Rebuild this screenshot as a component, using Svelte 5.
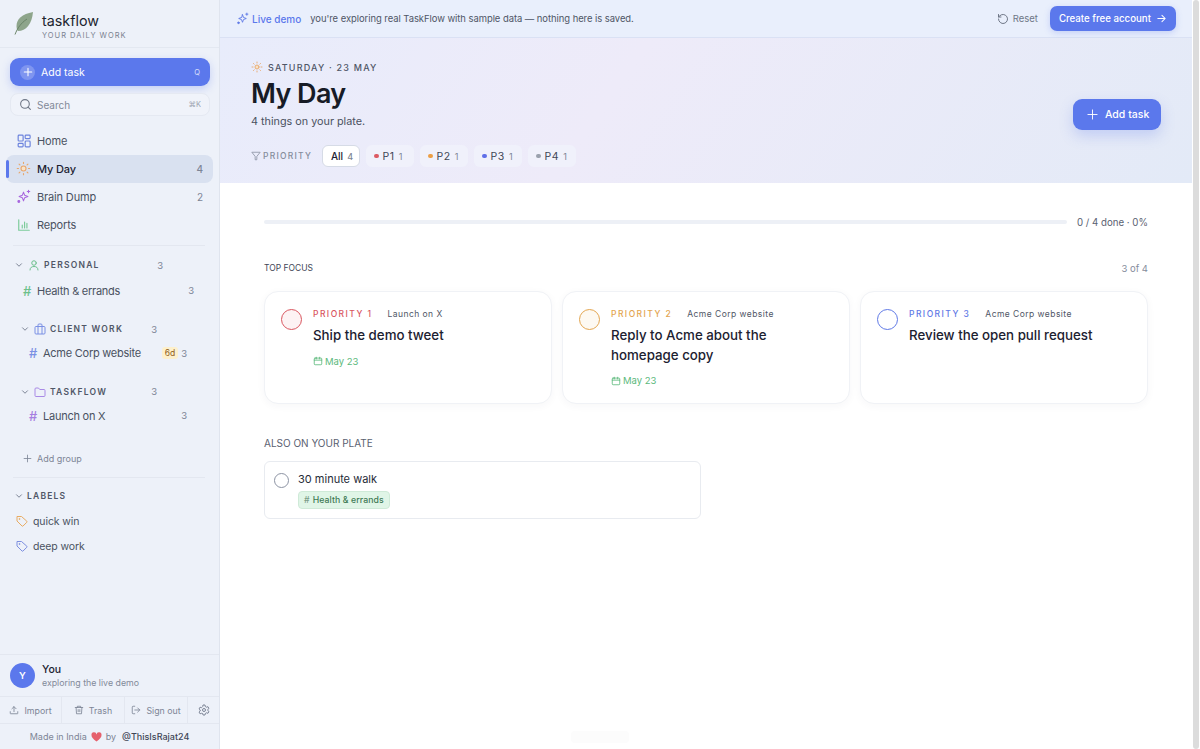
<script>
  const nav = [
    { name: 'Home', icon: 'home', count: '' },
    { name: 'My Day', icon: 'sun', count: 4, active: true },
    { name: 'Brain Dump', icon: 'spark', count: 2 },
    { name: 'Reports', icon: 'chart', count: '' }
  ];
  const filters = [
    { name: 'P1', color: '#dc5a63' },
    { name: 'P2', color: '#ec9f45' },
    { name: 'P3', color: '#5f6fe8' },
    { name: 'P4', color: '#9aa1ad' }
  ];
  const focus = [
    { level: 'PRIORITY 1', project: 'Launch on X', title: 'Ship the demo tweet', color: '#d9565f', fill: '#fdf3f4' },
    { level: 'PRIORITY 2', project: 'Acme Corp website', title: 'Reply to Acme about the homepage copy', color: '#e3a54f', fill: '#fdf9f2' },
    { level: 'PRIORITY 3', project: 'Acme Corp website', title: 'Review the open pull request', color: '#5f79e6', fill: '#ffffff', noDate: true }
  ];
</script>

{#snippet sun(size)}
  <svg width={size} height={size} viewBox="0 0 24 24" fill="none" stroke="#e8a76c" stroke-width="1.8" stroke-linecap="round">
    <circle cx="12" cy="12" r="4" fill="#f8e3c8" />
    <path d="M12 2v2M12 20v2M4.9 4.9l1.4 1.4M17.7 17.7l1.4 1.4M2 12h2M20 12h2M4.9 19.1l1.4-1.4M17.7 6.3l1.4-1.4" />
  </svg>
{/snippet}

{#snippet spark(size, color)}
  <svg width={size} height={size} viewBox="0 0 24 24" fill="none" stroke={color} stroke-width="1.7" stroke-linecap="round" stroke-linejoin="round">
    <path d="M12 5l1.900 5.100L19 12l-5.100 1.900L12 19l-1.900-5.100L5 12l5.100-1.900z" />
    <path d="M20 2v4M18 4h4" />
    <circle cx="4.500" cy="20" r="1.500" fill={color} />
  </svg>
{/snippet}

{#snippet tag(color)}
  <svg width="12" height="12" viewBox="0 0 24 24" fill="none" stroke={color} stroke-width="2" stroke-linejoin="round">
    <path d="M2 3v9l10 10a1.500 1.500 0 0 0 2.100 0l7.500-7.500a1.500 1.500 0 0 0 0-2.100L11 3z" />
    <circle cx="7" cy="8" r="1" />
  </svg>
{/snippet}

{#snippet chevron()}
  <svg class="chev" width="10" height="10" viewBox="0 0 24 24" fill="none" stroke="#7d8596" stroke-width="2.400" stroke-linecap="round" stroke-linejoin="round">
    <path d="M6 9l6 6 6-6" />
  </svg>
{/snippet}

{#snippet calendar()}
  <svg width="10" height="10" viewBox="0 0 24 24" fill="none" stroke="#5cb97c" stroke-width="2" stroke-linecap="round">
    <rect x="3" y="5" width="18" height="16" rx="2" />
    <path d="M3 10h18M8 3v4M16 3v4" />
  </svg>
{/snippet}

<div class="shell">
  <aside class="sidebar">
    <div class="brand">
      <svg width="20" height="23" viewBox="0 0 20 23">
        <path d="M19 0C8 2 2.500 7 2.500 14c0 2 .500 4 1.500 5C12 19 18 12 19 0z" fill="#8ea58b" />
        <path d="M1 22.500C3.500 16 7 11 13 7" fill="none" stroke="#6a8468" stroke-width="1" />
      </svg>
      <div class="brand-text">
        <div class="brand-name">taskflow</div>
        <div class="brand-sub">YOUR DAILY WORK</div>
      </div>
    </div>

    <div class="quick">
      <button class="add-task">
        <span class="plus-round">
          <svg width="10" height="10" viewBox="0 0 24 24" stroke="#fff" stroke-width="2.500" stroke-linecap="round"><path d="M12 3v18M3 12h18" /></svg>
        </span>
        <span>Add task</span>
        <span class="key">Q</span>
      </button>
      <div class="search">
        <svg width="13" height="13" viewBox="0 0 24 24" fill="none" stroke="#6f7787" stroke-width="2" stroke-linecap="round"><circle cx="11" cy="11" r="8" /><path d="M21 21l-4.300-4.300" /></svg>
        <span>Search</span>
        <span class="key">⌘K</span>
      </div>
    </div>

    <nav class="nav">
      {#each nav as item}
        <div class="nav-item" class:active={item.active}>
          <span class="nav-icon">
            {#if item.icon === 'home'}
              <svg width="14" height="14" viewBox="0 0 24 24" fill="none" stroke="#6c83dd" stroke-width="2"><rect x="2" y="2" width="8.500" height="10" rx="1.500" /><rect x="14" y="2" width="8.500" height="6" rx="1.500" /><rect x="14" y="12" width="8.500" height="10" rx="1.500" /><rect x="2" y="16" width="8.500" height="6" rx="1.500" /></svg>
            {:else if item.icon === 'sun'}
              {@render sun(15)}
            {:else if item.icon === 'spark'}
              {@render spark(15, '#a867de')}
            {:else}
              <svg width="14" height="14" viewBox="0 0 24 24" fill="none" stroke="#7ccb9a" stroke-width="2" stroke-linecap="round"><path d="M3 3v18h18M9 17v-5M13 17V7M17 17v-8" /></svg>
            {/if}
          </span>
          <span class="nav-name">{item.name}</span>
          <span class="nav-count">{item.count}</span>
        </div>
      {/each}
    </nav>

    <div class="rule first-rule"></div>

    <div class="group">
      <div class="group-head">
        {@render chevron()}
        <svg width="12" height="12" viewBox="0 0 24 24" fill="none" stroke="#6cc08c" stroke-width="2" stroke-linecap="round"><circle cx="12" cy="8" r="4.500" /><path d="M4 22c0-5 3.500-7 8-7s8 2 8 7" /></svg>
        <span class="group-name">PERSONAL</span>
        <span class="group-count">3</span>
      </div>
      <div class="project">
        <span class="hash green">#</span>
        <span class="project-name">Health &amp; errands</span>
        <span class="project-count">3</span>
      </div>
    </div>

    <div class="group nested">
      <div class="group-head">
        {@render chevron()}
        <svg width="12" height="12" viewBox="0 0 24 24" fill="none" stroke="#7b90e4" stroke-width="2"><rect x="2" y="7" width="20" height="15" rx="2" /><path d="M8 22V4a2 2 0 0 1 2-2h4a2 2 0 0 1 2 2v18" /></svg>
        <span class="group-name">CLIENT WORK</span>
        <span class="group-count">3</span>
      </div>
      <div class="project">
        <span class="hash blue">#</span>
        <span class="project-name">Acme Corp website</span>
        <span class="due">6d</span>
        <span class="project-count">3</span>
      </div>
    </div>

    <div class="group nested">
      <div class="group-head">
        {@render chevron()}
        <svg width="12" height="12" viewBox="0 0 24 24" fill="none" stroke="#a98ae6" stroke-width="2" stroke-linejoin="round"><path d="M2 6a2 2 0 0 1 2-2h5l2.500 3H20a2 2 0 0 1 2 2v10a2 2 0 0 1-2 2H4a2 2 0 0 1-2-2z" /></svg>
        <span class="group-name">TASKFLOW</span>
        <span class="group-count">3</span>
      </div>
      <div class="project">
        <span class="hash purple">#</span>
        <span class="project-name">Launch on X</span>
        <span class="project-count">3</span>
      </div>
    </div>

    <div class="add-group">
      <svg width="9" height="9" viewBox="0 0 24 24" stroke="#7d8596" stroke-width="2.200" stroke-linecap="round"><path d="M12 3v18M3 12h18" /></svg>
      <span>Add group</span>
    </div>

    <div class="rule"></div>

    <div class="labels">
      <div class="labels-head">
        {@render chevron()}
        <span class="group-name">LABELS</span>
      </div>
      <div class="label">{@render tag('#e8ab62')}<span>quick win</span></div>
      <div class="label">{@render tag('#7d8fe0')}<span>deep work</span></div>
    </div>

    <div class="side-foot">
      <div class="user">
        <span class="avatar">Y</span>
        <div>
          <div class="user-name">You</div>
          <div class="user-sub">exploring the live demo</div>
        </div>
      </div>
      <div class="actions">
        <div class="action">
          <svg width="10" height="10" viewBox="0 0 24 24" fill="none" stroke="#7d8596" stroke-width="2" stroke-linecap="round" stroke-linejoin="round"><path d="M12 16V4M7 9l5-5 5 5M3 16v4a1 1 0 0 0 1 1h16a1 1 0 0 0 1-1v-4" /></svg>
          Import
        </div>
        <div class="action">
          <svg width="10" height="10" viewBox="0 0 24 24" fill="none" stroke="#7d8596" stroke-width="2" stroke-linecap="round" stroke-linejoin="round"><path d="M3 6h18M8 6V3h8v3M5 6l1 15h12l1-15M10 11v5M14 11v5" /></svg>
          Trash
        </div>
        <div class="action">
          <svg width="10" height="10" viewBox="0 0 24 24" fill="none" stroke="#7d8596" stroke-width="2" stroke-linecap="round" stroke-linejoin="round"><path d="M9 3H5a2 2 0 0 0-2 2v14a2 2 0 0 0 2 2h4M16 17l5-5-5-5M21 12H9" /></svg>
          Sign out
        </div>
        <div class="action last">
          <svg width="12" height="12" viewBox="0 0 24 24" fill="none" stroke="#7d8596" stroke-width="2" stroke-linejoin="round"><circle cx="12" cy="12" r="3" /><path d="M10 2h4l.6 3 2.400 1.400 2.900-1 2 3.500-2.300 2v2.200l2.300 2-2 3.500-2.900-1-2.400 1.400-.6 3h-4l-.6-3L7 18.600l-2.900 1-2-3.500 2.300-2v-2.200l-2.300-2 2-3.500 2.900 1L9.400 5z" /></svg>
        </div>
      </div>
      <div class="made">
        Made in India
        <svg width="11" height="10" viewBox="0 0 24 22"><path d="M12 21C4 15 1 11 1 7a5.500 5.500 0 0 1 11-1.500A5.500 5.500 0 0 1 23 7c0 4-3 8-11 14z" fill="#e5616d" /></svg>
        by <b>@ThisIsRajat24</b>
      </div>
    </div>
  </aside>

  <main class="main">
    <div class="banner">
      <span class="live">{@render spark(13, '#5f79e6')}<span>Live demo</span></span>
      <span class="banner-text">you're exploring real TaskFlow with sample data — nothing here is saved.</span>
      <span class="reset">
        <svg width="12" height="12" viewBox="0 0 24 24" fill="none" stroke="#6f7787" stroke-width="2" stroke-linecap="round" stroke-linejoin="round"><path d="M3 12a9 9 0 1 0 3-6.700L3 8M3 3v5h5" /></svg>
        Reset
      </span>
      <button class="create">
        Create free account
        <svg width="11" height="11" viewBox="0 0 24 24" fill="none" stroke="#fff" stroke-width="2.200" stroke-linecap="round" stroke-linejoin="round"><path d="M4 12h16M13 5l7 7-7 7" /></svg>
      </button>
    </div>

    <header class="hero">
      <div>
        <div class="date">{@render sun(12)}<span>SATURDAY · 23 MAY</span></div>
        <h1>My Day</h1>
        <p class="plate">4 things on your plate.</p>
        <div class="filters">
          <span class="filter-label">
            <svg width="10" height="10" viewBox="0 0 24 24" fill="none" stroke="#8c93a3" stroke-width="2" stroke-linejoin="round"><path d="M2 3h20l-8 10v8h-4v-8z" /></svg>
            PRIORITY
          </span>
          <span class="chip all">All <i>4</i></span>
          {#each filters as f}
            <span class="chip"><em style="background: {f.color}"></em>{f.name} <i>1</i></span>
          {/each}
        </div>
      </div>
      <button class="hero-add">
        <svg width="11" height="11" viewBox="0 0 24 24" stroke="#fff" stroke-width="2" stroke-linecap="round"><path d="M12 2v20M2 12h20" /></svg>
        Add task
      </button>
    </header>

    <section class="content">
      <div class="progress">
        <div class="track"></div>
        <span>0 / 4 done · 0%</span>
      </div>

      <div class="focus-head">
        <span>TOP FOCUS</span>
        <span class="of">3 of 4</span>
      </div>

      <div class="cards">
        {#each focus as t}
          <article class="card">
            <span class="ring" style="border-color: {t.color}; background: {t.fill}"></span>
            <div>
              <div class="meta">
                <span class="level" style="color: {t.color}">{t.level}</span>
                <span class="project-tag">{t.project}</span>
              </div>
              <h3>{t.title}</h3>
              {#if !t.noDate}
                <div class="when">{@render calendar()}<span>May 23</span></div>
              {/if}
            </div>
          </article>
        {/each}
      </div>

      <h2 class="also">ALSO ON YOUR PLATE</h2>
      <article class="row">
        <span class="row-ring"></span>
        <div>
          <div class="row-title">30 minute walk</div>
          <span class="pill"><i>#</i> Health &amp; errands</span>
        </div>
      </article>
    </section>
  </main>

  <div class="scroll"><div class="thumb"></div></div>
  <div class="ghost"></div>
</div>

<style>
  :global(body) {
    margin: 0;
    background: #fff;
    font-family: Inter, "Noto Sans", sans-serif;
    color: #1c2130;
    overflow: hidden;
  }

  .shell {
    display: flex;
    height: 749px;
    overflow: hidden;
    position: relative;
  }

  button {
    font: inherit;
    border: 0;
    color: #fff;
  }

  svg {
    flex: none;
    display: block;
  }

  /* sidebar */
  .sidebar {
    width: 219px;
    flex: none;
    display: flex;
    flex-direction: column;
    background: #edf1f9;
    border-right: 1px solid #dfe4ee;
  }

  .brand {
    height: 47px;
    display: flex;
    align-items: center;
    gap: 8px;
    padding: 0 14px;
    border-bottom: 1px solid #e3e8f1;
  }

  .brand-text {
    padding-top: 6px;
  }

  .brand-name {
    font-size: 14.300px;
    line-height: 16px;
    color: #20242e;
  }

  .brand-sub {
    margin-top: 1px;
    font-size: 7.500px;
    line-height: 11px;
    letter-spacing: 1px;
    color: #7a8190;
  }

  .quick {
    padding: 10px 10px 0;
  }

  .add-task {
    width: 200px;
    height: 28px;
    display: flex;
    align-items: center;
    gap: 6px;
    padding: 0 10px;
    background: #5b78ec;
    border-radius: 9px;
    font-size: 10.500px;
    box-shadow: 0 3px 8px rgba(91, 120, 236, 0.28);
  }

  .plus-round {
    width: 15px;
    height: 15px;
    border-radius: 50%;
    background: rgba(255, 255, 255, 0.22);
    display: flex;
    align-items: center;
    justify-content: center;
  }

  .key {
    margin-left: auto;
    font-size: 7.500px;
    opacity: 0.75;
  }

  .search {
    width: 200px;
    height: 23px;
    margin-top: 7px;
    display: flex;
    align-items: center;
    gap: 5px;
    padding: 0 8px;
    box-sizing: border-box;
    background: #f0f3fa;
    border: 1px solid #e5e9f2;
    border-radius: 8px;
    font-size: 10px;
    color: #828998;
  }

  .nav {
    padding: 10.500px 6px 0;
    display: flex;
    flex-direction: column;
  }

  .nav-item {
    height: 28px;
    display: flex;
    align-items: center;
    gap: 6px;
    padding: 0 10px;
    border-radius: 8px;
    font-size: 11px;
    letter-spacing: -0.15px;
    color: #4a5161;
    position: relative;
  }

  .nav-icon {
    width: 15px;
    display: flex;
    justify-content: center;
  }

  .nav-item.active {
    background: #d9e1f0;
    color: #1c2130;
    font-weight: 500;
  }

  .nav-item.active::before {
    content: '';
    position: absolute;
    left: 0;
    top: 5px;
    bottom: 5px;
    width: 2.500px;
    border-radius: 2px;
    background: #5b78ec;
  }

  .nav-count {
    margin-left: auto;
    font-size: 10px;
    letter-spacing: 0;
    color: #7d8596;
  }

  .rule {
    height: 1px;
    margin: 0 14px 0 13px;
    background: #e3e7f0;
    flex: none;
  }

  .first-rule {
    margin-top: 6.500px;
  }

  .group {
    padding-left: 14px;
  }

  .group-head {
    display: flex;
    align-items: center;
    height: 18px;
    margin-top: 10px;
    gap: 4px;
  }

  .group-name {
    font-size: 8.500px;
    font-weight: 600;
    letter-spacing: 1.250px;
    color: #505767;
  }

  .group-count {
    margin-left: auto;
    margin-right: 56px;
    font-size: 9.500px;
    color: #7d8596;
  }

  .nested {
    padding-left: 20px;
  }

  .nested .group-count {
    margin-right: 62px;
  }

  .nested .group-head {
    margin-top: 17px;
  }

  .group .project {
    height: 25px;
    margin-top: 4px;
    display: flex;
    align-items: center;
    padding-left: 9px;
    padding-right: 25px;
    font-size: 11px;
    letter-spacing: -0.25px;
    color: #4a5161;
  }

  .nested .project {
    margin-top: 2.500px;
    padding-right: 32px;
    padding-left: 9px;
  }

  .hash {
    font-size: 13px;
    width: 14px;
    font-weight: 500;
    letter-spacing: 0;
  }

  .green {
    color: #6cc08c;
  }

  .blue {
    color: #7b90e4;
  }

  .purple {
    color: #a67fe0;
  }

  .project-count {
    margin-left: auto;
    font-size: 9.500px;
    letter-spacing: 0;
    color: #7d8596;
  }

  .due {
    margin-left: auto;
    margin-right: 3px;
    padding: 1px 3px;
    border-radius: 3px;
    font-size: 8.500px;
    letter-spacing: 0;
    background: #fdf0cc;
    color: #8d5d1c;
  }

  .due + .project-count {
    margin-left: 0;
  }

  .add-group {
    display: flex;
    align-items: center;
    gap: 5px;
    margin-top: 22.500px;
    padding: 0 23px;
    height: 15px;
    font-size: 9px;
    color: #7d8596;
    margin-bottom: 11px;
  }

  .labels {
    padding: 10px 14px 0;
  }

  .labels-head {
    display: flex;
    align-items: center;
    gap: 3px;
    height: 16px;
  }

  .labels-head .group-name {
    letter-spacing: 1.200px;
  }

  .label {
    display: flex;
    align-items: center;
    gap: 5px;
    height: 25px;
    font-size: 10.500px;
    letter-spacing: -0.1px;
    color: #4a5161;
    margin-left: 2px;
  }

  .labels-head + .label {
    margin-top: 5px;
  }

  .side-foot {
    margin-top: auto;
  }

  .user {
    height: 41px;
    display: flex;
    align-items: center;
    gap: 7px;
    padding: 0 10px;
    border-top: 1px solid #e3e7f0;
    border-bottom: 1px solid #e3e7f0;
  }

  .avatar {
    width: 25px;
    height: 25px;
    border-radius: 50%;
    background: #5b78ec;
    color: #fff;
    font-size: 9.500px;
    font-weight: 600;
    display: flex;
    align-items: center;
    justify-content: center;
  }

  .user-name {
    font-size: 10.500px;
    line-height: 13px;
    font-weight: 500;
  }

  .user-sub {
    font-size: 8.800px;
    line-height: 13px;
    color: #838a99;
  }

  .actions {
    display: grid;
    grid-template-columns: 62px 63px 63px 31px;
    height: 26px;
    border-bottom: 1px solid #e3e7f0;
  }

  .action {
    display: flex;
    align-items: center;
    justify-content: center;
    gap: 5px;
    font-size: 8.800px;
    color: #7d8596;
    border-right: 1px solid #e3e7f0;
  }

  .action.last {
    border-right: 0;
  }

  .made {
    height: 25px;
    display: flex;
    align-items: center;
    justify-content: center;
    gap: 4px;
    font-size: 9px;
    color: #7d8596;
  }

  .made b {
    font-weight: 500;
    color: #3f4656;
    margin-left: 2px;
  }

  /* main */
  .main {
    flex: 1;
    min-width: 0;
    display: flex;
    flex-direction: column;
  }

  .banner {
    height: 37px;
    flex: none;
    display: flex;
    align-items: center;
    padding: 0 16px 0 16px;
    background: #e9effc;
    border-bottom: 1px solid #dae1f4;
    font-size: 9.450px;
  }

  .live {
    display: flex;
    align-items: center;
    gap: 3px;
    font-size: 10px;
    color: #5b78ec;
    font-weight: 500;
  }

  .banner-text {
    margin-left: 9px;
    letter-spacing: -0.05px;
    color: #4f5666;
  }

  .reset {
    margin-left: auto;
    display: flex;
    align-items: center;
    gap: 4px;
    font-size: 9.500px;
    color: #6f7787;
  }

  .create {
    margin-left: 12px;
    height: 25px;
    padding: 0 9px;
    display: flex;
    align-items: center;
    gap: 5px;
    background: #5b78ec;
    border-radius: 7px;
    font-size: 9.700px;
    font-weight: 500;
    box-shadow: 0 2px 6px rgba(91, 120, 236, 0.25);
  }

  .hero {
    height: 145px;
    flex: none;
    box-sizing: border-box;
    display: flex;
    justify-content: space-between;
    align-items: center;
    padding: 22px 31px 0 31px;
    background: linear-gradient(125deg, #e8ecfb 0%, #eeebf9 40%, #e3eaf7 100%);
  }

  .hero > div {
    align-self: flex-start;
  }

  .date {
    display: flex;
    align-items: center;
    gap: 5px;
    height: 14px;
    font-size: 9px;
    font-weight: 500;
    letter-spacing: 1.200px;
    color: #4f5666;
  }

  h1 {
    margin: 2px 0 0;
    font-size: 27px;
    line-height: 35px;
    font-weight: 600;
    letter-spacing: -0.6px;
    color: #171b26;
  }

  .plate {
    margin: 3px 0 0;
    font-size: 10.800px;
    line-height: 16px;
    color: #4a5161;
  }

  .filters {
    display: flex;
    align-items: center;
    gap: 6px;
    margin-top: 15px;
  }

  .filter-label {
    display: flex;
    align-items: center;
    gap: 2px;
    width: 65px;
    font-size: 8.500px;
    font-weight: 500;
    letter-spacing: 1.250px;
    color: #858c9c;
  }

  .chip {
    height: 22px;
    width: 48px;
    box-sizing: border-box;
    padding: 0 0 0 8px;
    display: flex;
    align-items: center;
    gap: 3px;
    border-radius: 6px;
    background: #f0f1fb;
    font-size: 10.500px;
    color: #3f4656;
    letter-spacing: 0.6px;
  }

  .chip i {
    font-style: normal;
    font-size: 9px;
    margin-left: 1px;
    letter-spacing: 0;
    color: #7d8596;
  }

  .chip em {
    width: 4.500px;
    height: 4.500px;
    border-radius: 50%;
    margin-right: 1px;
  }

  .chip.all {
    background: #fff;
    border: 1px solid #d6dbe6;
    width: 38px;
    color: #1c2130;
    font-size: 10px;
    font-weight: 500;
    padding: 0 0 0 8px;
    letter-spacing: 0;
  }

  .hero-add {
    height: 31px;
    width: 88px;
    padding: 0 0 0 14px;
    margin-top: -15px;
    display: flex;
    align-items: center;
    gap: 7px;
    background: #5b78ec;
    border-radius: 9px;
    font-size: 10.500px;
    font-weight: 500;
    box-shadow: 0 6px 14px rgba(91, 120, 236, 0.25);
  }

  .content {
    padding: 32px 44px 0;
  }

  .progress {
    display: flex;
    align-items: center;
    gap: 10px;
    font-size: 9.700px;
    color: #5a6171;
    height: 14px;
  }

  .track {
    flex: 1;
    height: 4px;
    border-radius: 2px;
    background: #edf0f6;
  }

  .focus-head {
    margin-top: 33px;
    display: flex;
    justify-content: space-between;
    align-items: center;
    font-size: 8.500px;
    height: 12px;
    color: #3f4656;
  }

  .of {
    font-size: 9.500px;
    color: #858c9c;
  }

  .cards {
    margin-top: 17px;
    display: grid;
    grid-template-columns: repeat(3, 1fr);
    gap: 10px;
  }

  .card {
    height: 113px;
    box-sizing: border-box;
    display: flex;
    gap: 11px;
    padding: 16px;
    border: 1px solid #f0f2f6;
    border-radius: 14px;
    background: #fff;
    box-shadow: 0 2px 8px rgba(40, 50, 80, 0.04);
  }

  .ring {
    width: 21px;
    height: 21px;
    box-sizing: border-box;
    flex: none;
    margin-top: 1px;
    border: 1.500px solid;
    border-radius: 50%;
  }

  .meta {
    display: flex;
    gap: 15px;
    height: 12px;
    align-items: center;
  }

  .level {
    font-size: 8.500px;
    font-weight: 500;
    letter-spacing: 1.450px;
  }

  .project-tag {
    font-size: 8.500px;
    letter-spacing: 0.45px;
    color: #4f5666;
  }

  h3 {
    margin: 6px 0 0;
    font-size: 13.300px;
    line-height: 19.500px;
    font-weight: 500;
    color: #1c2130;
  }

  .when {
    display: flex;
    align-items: center;
    gap: 2px;
    margin-top: 10px;
    font-size: 9.500px;
    color: #5cb97c;
  }

  .also {
    margin: 32px 0 0;
    font-size: 10px;
    line-height: 14px;
    font-weight: 400;
    color: #5a6171;
  }

  .row {
    width: 437px;
    height: 58px;
    margin-top: 11px;
    box-sizing: border-box;
    display: flex;
    gap: 9px;
    padding: 9px;
    border: 1px solid #e8ebf0;
    border-radius: 6px;
  }

  .row-ring {
    width: 15px;
    height: 15px;
    box-sizing: border-box;
    margin-top: 2px;
    flex: none;
    border: 1.300px solid #8c93a3;
    border-radius: 50%;
  }

  .row-title {
    font-size: 11px;
    line-height: 16px;
    color: #262b38;
  }

  .pill {
    display: inline-flex;
    align-items: center;
    gap: 3px;
    height: 18px;
    box-sizing: border-box;
    margin-top: 4px;
    padding: 0 5px;
    border: 1px solid #cfead8;
    border-radius: 4px;
    background: #e0f5e7;
    font-size: 8.700px;
    letter-spacing: 0.1px;
    font-weight: 500;
    color: #3f7a55;
  }

  .pill i {
    font-style: normal;
    color: #7b9c87;
  }

  .scroll {
    width: 8px;
    flex: none;
    background: #fff;
  }

  .thumb {
    height: 100%;
    width: 6px;
    margin-left: 1px;
    border-radius: 3px;
    background: #dcdcdc;
  }

  /* faint toast peeking at the bottom edge */
  .ghost {
    position: absolute;
    left: 571px;
    top: 731px;
    width: 58px;
    height: 12px;
    border-radius: 4px;
    background: #fcfcfc;
  }
</style>
